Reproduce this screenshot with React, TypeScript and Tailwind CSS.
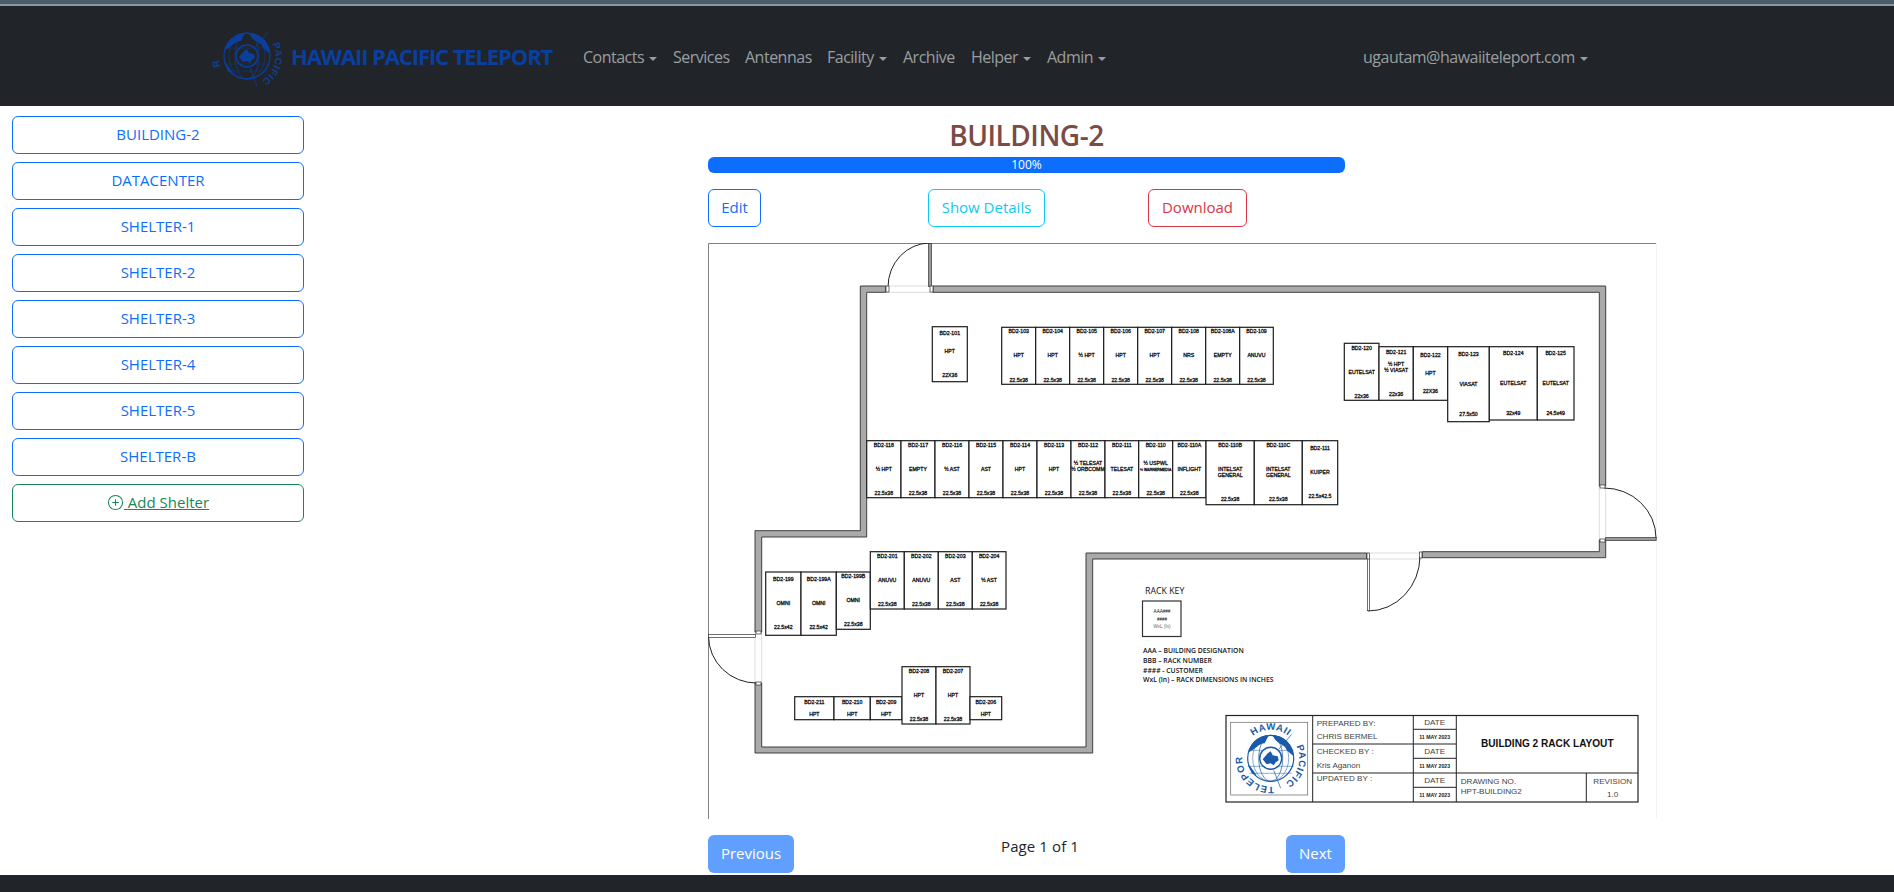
import { CirclePlus } from "lucide-react";

const shelters = [
  "BUILDING-2",
  "DATACENTER",
  "SHELTER-1",
  "SHELTER-2",
  "SHELTER-3",
  "SHELTER-4",
  "SHELTER-5",
  "SHELTER-B",
];

const navItems = [
  { label: "Contacts", caret: true, width: "w-[90px]" },
  { label: "Services", caret: false, width: "w-[72px]" },
  { label: "Antennas", caret: false, width: "w-[82px]" },
  { label: "Facility", caret: true, width: "w-[76px]" },
  { label: "Archive", caret: false, width: "w-[68px]" },
  { label: "Helper", caret: true, width: "w-[76px]" },
  { label: "Admin", caret: true, width: "w-[316px]" },
];

// ys = centre lines of the id, the first customer line and the size
type Rack = {
  x1: number;
  x2: number;
  y1: number;
  y2: number;
  id: string;
  who: string[];
  size: string;
  ys: [number, number, number];
};

function row(
  xs: number[],
  y1: number,
  y2: number,
  ys: [number, number, number],
  items: [string, string[], string, number?][],
): Rack[] {
  return items.map(([id, who, size, first], i) => ({
    x1: xs[i],
    x2: xs[i + 1],
    y1,
    y2,
    id,
    who,
    size,
    ys: [ys[0], first ?? ys[1], ys[2]],
  }));
}

const racks: Rack[] = [
  ...row([932.3, 967.3], 326.7, 381.7, [332.7, 351, 375], [["BD2-101", ["HPT"], "22X36"]]),
  ...row([1001.7, 1035.7, 1069.7, 1103.7, 1137.7, 1171.7, 1205.7, 1239.7, 1273.3], 327.3, 384.3, [331, 355, 380], [
    ["BD2-103", ["HPT"], "22.5x38"],
    ["BD2-104", ["HPT"], "22.5x38"],
    ["BD2-105", ["½ HPT"], "22.5x38"],
    ["BD2-106", ["HPT"], "22.5x38"],
    ["BD2-107", ["HPT"], "22.5x38"],
    ["BD2-108", ["NRS"], "22.5x38"],
    ["BD2-108A", ["EMPTY"], "22.5x38"],
    ["BD2-109", ["ANUVU"], "22.5x38"],
  ]),
  ...row([1344.3, 1379], 343.3, 400.3, [347.7, 371.7, 395.7], [["BD2-120", ["EUTELSAT"], "22x36"]]),
  ...row([1379, 1413.3], 346.7, 400.3, [352, 364, 394], [["BD2-121", ["½ HPT", "½ VIASAT"], "22x36"]]),
  ...row([1413.3, 1447.7], 346.7, 400.3, [355, 372.7, 391], [["BD2-122", ["HPT"], "22X36"]]),
  ...row([1447.7, 1489.3], 346.7, 421.7, [353.7, 383.7, 413.7], [["BD2-123", ["VIASAT"], "27.5x50"]]),
  ...row([1489.3, 1537.3, 1574], 346.7, 420, [352.7, 382.7, 412.7], [
    ["BD2-124", ["EUTELSAT"], "32x49"],
    ["BD2-125", ["EUTELSAT"], "24.5x49"],
  ]),
  ...row([866.7, 901, 935, 969, 1003, 1037, 1071, 1105, 1138.7, 1172.7, 1206], 440.7, 497.7, [445, 469, 493], [
    ["BD2-118", ["½ HPT"], "22.5x38"],
    ["BD2-117", ["EMPTY"], "22.5x38"],
    ["BD2-116", ["½ AST"], "22.5x38"],
    ["BD2-115", ["AST"], "22.5x38"],
    ["BD2-114", ["HPT"], "22.5x38"],
    ["BD2-113", ["HPT"], "22.5x38"],
    ["BD2-112", ["½ TELESAT", "½ ORBCOMM"], "22.5x38", 463],
    ["BD2-111", ["TELESAT"], "22.5x38"],
    ["BD2-110", ["½ USPWL", "½ WARNERMEDIA"], "22.5x38", 463],
    ["BD2-110A", ["INFLIGHT"], "22.5x38"],
  ]),
  ...row([1206, 1254.3, 1302.3], 440.7, 504.7, [445, 469, 499], [
    ["BD2-110B", ["INTELSAT", "GENERAL"], "22.5x38"],
    ["BD2-110C", ["INTELSAT", "GENERAL"], "22.5x38"],
  ]),
  ...row([1302.3, 1337.7], 440.7, 504.7, [447.7, 471.7, 495.7], [["BD2-111", ["KUIPER"], "22.5x42.5"]]),
  ...row([765.7, 801, 836.3], 572, 635.3, [578.7, 602.7, 627], [
    ["BD2-199", ["OMNI"], "22.5x42"],
    ["BD2-199A", ["OMNI"], "22.5x42"],
  ]),
  ...row([836.3, 870.3], 572, 629.3, [576, 600, 624], [["BD2-199B", ["OMNI"], "22.5x38"]]),
  ...row([870.3, 904.3, 938.3, 972.3, 1006], 551.7, 609, [555.7, 580, 604], [
    ["BD2-201", ["ANUVU"], "22.5x38"],
    ["BD2-202", ["ANUVU"], "22.5x38"],
    ["BD2-203", ["AST"], "22.5x38"],
    ["BD2-204", ["½ AST"], "22.5x38"],
  ]),
  ...row([794.7, 834, 870.3, 902], 696.7, 719.7, [702, 714, 0], [
    ["BD2-211", ["HPT"], ""],
    ["BD2-210", ["HPT"], ""],
    ["BD2-209", ["HPT"], ""],
  ]),
  ...row([902, 936, 970], 666.7, 724, [670.7, 695, 719], [
    ["BD2-208", ["HPT"], "22.5x38"],
    ["BD2-207", ["HPT"], "22.5x38"],
  ]),
  ...row([970, 1001.7], 696.7, 719.7, [702, 714, 0], [["BD2-206", ["HPT"], ""]]),
];

const walls = [
  "M933 286H1605.7V486H1599.3V292.3H933Z",
  "M1599.3 540H1605.7V557.7H1422.3V551.7H1599.3Z",
  "M1366.7 553H1086V747H761.7V683H755V753H1092.7V559H1366.7Z",
  "M755 632H761.7V537H866.7V292.3H885.7V286H860.3V530.7H755Z",
];

const sans = "'Liberation Sans', Arial, sans-serif";
const open = "'Open Sans', sans-serif";

function RackBox({ r }: { r: Rack }) {
  const cx = (r.x1 + r.x2) / 2;
  return (
    <g fontFamily={sans} fontSize={5.2} fill="#111" textAnchor="middle">
      <rect x={r.x1} y={r.y1} width={r.x2 - r.x1} height={r.y2 - r.y1} fill="#fff" stroke="#1c1c1c" strokeWidth={1.2} />
      <text x={cx} y={r.ys[0] + 1.8} stroke="#111" strokeWidth={0.3}>{r.id}</text>
      {r.who.map((w, i) => (
        <text
          key={w + i}
          x={cx}
          y={r.ys[1] + 1.8 + i * 6}
          stroke="#111"
          strokeWidth={0.3}
          fontSize={w.length > 11 ? 3.6 : 5.2}
        >
          {w}
        </text>
      ))}
      {r.size && <text x={cx} y={r.ys[2] + 1.8} stroke="#111" strokeWidth={0.3}>{r.size}</text>}
    </g>
  );
}

// the teleport seal, drawn around 0,0
function Globe({ color, pathId, full }: { color: string; pathId: string; full: boolean }) {
  const ring = "M-28.5 0A28.5 28.5 0 1 1 28.5 0A28.5 28.5 0 1 1 -28.5 0";
  return (
    <g>
      <path id={pathId} d={ring} fill="none" />
      <circle r={23} fill="none" stroke={color} strokeWidth={1.2} />
      <ellipse rx={12} ry={23} fill="none" stroke={color} strokeWidth={0.7} />
      <ellipse rx={18} ry={23} fill="none" stroke={color} strokeWidth={0.5} />
      <line x1={-23} x2={23} y1={-8} y2={-8} stroke={color} strokeWidth={0.5} />
      <line x1={-23} x2={23} y1={8} y2={8} stroke={color} strokeWidth={0.5} />
      <line x1={-21} x2={21} y1={15} y2={15} stroke={color} strokeWidth={0.5} />
      <path d="M-22 -6C-20 -17 -10 -23 -2 -23L-6 -15C-12 -15 -15 -9 -22 -6Z" fill={color} />
      <path d="M2 -23C13 -23 22 -14 23 -2L16 -8C14 -15 6 -13 2 -23Z" fill={color} />
      <path d="M-22 6L-14 17L-19 15Z" fill={color} />
      <line x1={8} y1={-9} x2={21} y2={-24} stroke={color} strokeWidth={0.7} />
      <line x1={3} y1={12} x2={10} y2={30} stroke={color} strokeWidth={0.7} />
      <circle r={11} fill={full ? "#fff" : "none"} stroke={color} strokeWidth={1.4} />
      <path d="M-8 1L-3 -5L0 -7L2 -3L7 -2L8 2L5 4L3 7L0 5L-4 6Z" fill={color} />
      <g fill={color} fontFamily={sans} fontWeight={700} fontSize={9.6} textAnchor="middle" letterSpacing={0.7}>
        {full && (
          <text>
            <textPath href={`#${pathId}`} startOffset="25%">HAWAII</textPath>
          </text>
        )}
        <text>
          <textPath href={`#${pathId}`} startOffset="54.8%">PACIFIC</textPath>
        </text>
        <text>
          <textPath href={`#${pathId}`} startOffset={full ? "89%" : "98%"}>{full ? "TELEPORT" : "RT"}</textPath>
        </text>
      </g>
    </g>
  );
}

function FloorPlan() {
  return (
    <svg viewBox="708 243 949 576" className="block h-[576px] w-[949px]">
      <rect x={708} y={243} width={949} height={576} fill="#fff" />
      <path d="M708.5 819V243.5H1657" fill="none" stroke="#808080" strokeWidth={1} />
      <path d="M1656.5 243V819" fill="none" stroke="#f2f2f2" strokeWidth={1} />

      {/* door openings */}
      <g fill="none" stroke="#ddd" strokeWidth={1}>
        <path d="M886 286H933M886 292.3H933" />
        <path d="M1599.3 486V540M1605.7 486V540" />
        <path d="M1367 553H1422M1367 559H1422" />
        <path d="M755 632V683M761.7 632V683" />
      </g>

      <g fill="#aaa" stroke="#3f3f3f" strokeWidth={1}>
        {walls.map((d) => (
          <path key={d} d={d} />
        ))}
      </g>

      {/* door leaves and swings */}
      <g fill="none" stroke="#222" strokeWidth={1}>
        <path d="M930 243A42 44 0 0 0 888 287" />
        <path d="M1604 488A52 50 0 0 1 1656 538" />
        <path d="M1368 611A52 55 0 0 0 1420 556" />
        <path d="M708.5 636A48 47 0 0 0 757 683" />
      </g>
      <g fill="#999" stroke="#333" strokeWidth={0.7}>
        <rect x={928.5} y={243.5} width={3} height={43} />
        <rect x={1605.7} y={537.5} width={50.5} height={3} />
        <rect x={1367.5} y={558.7} width={2} height={52} fill="#fff" />
        <rect x={708.5} y={634.5} width={47} height={3} fill="#fff" />
      </g>
      <g fill="#fff" stroke="#333" strokeWidth={0.7}>
        <rect x={886} y={286} width={3} height={6} />
        <rect x={930} y={286} width={3} height={6} />
        <rect x={1600} y={485} width={5} height={3} />
        <rect x={1600} y={539} width={5} height={3} />
        <rect x={1367} y={553} width={2.5} height={6} />
        <rect x={1419.5} y={552} width={2.5} height={6} />
        <rect x={756} y={631} width={5} height={3} />
        <rect x={756} y={682} width={5} height={3} />
      </g>

      {racks.map((r) => (
        <RackBox key={r.id + r.x1} r={r} />
      ))}

      {/* rack key */}
      <g fontFamily={open} fill="#111">
        <text x={1145} y={594} fontSize={8.8} fontWeight={500}>RACK KEY</text>
        <rect x={1142.5} y={601} width={38.5} height={35.5} fill="#fff" stroke="#333" strokeWidth={1.2} />
        <g fontSize={4.6} textAnchor="middle" fontFamily={sans}>
          <text x={1162} y={613}>AAA###</text>
          <text x={1162} y={621}>####</text>
          <text x={1162} y={628} fill="#666">WxL (In)</text>
        </g>
        <g fontSize={6.8} fontWeight={600}>
          <text x={1143} y={653}>AAA – BUILDING DESIGNATION</text>
          <text x={1143} y={663}>BBB – RACK NUMBER</text>
          <text x={1143} y={672.5}>#### - CUSTOMER</text>
          <text x={1143} y={682}>WxL (In) – RACK DIMENSIONS IN INCHES</text>
        </g>
      </g>

      {/* title block */}
      <rect x={1226} y={715.5} width={412} height={86.5} fill="#fff" stroke="#222" strokeWidth={1.2} />
      <rect x={1230.7} y={722.3} width={77} height={72.7} fill="#fff" stroke="#666" strokeWidth={0.7} />
      <g transform="translate(1270.7 758.3)">
        <Globe color="#1a5aa8" pathId="seal-title" full />
      </g>
      <path
        d="M1312.7 715.5V802M1413.3 715.5V802M1456.3 715.5V802M1586.3 773V802M1312.7 744H1456.3M1312.7 773H1638M1413.3 729.3H1456.3M1413.3 758.3H1456.3M1413.3 787.3H1456.3"
        fill="none"
        stroke="#222"
        strokeWidth={1}
      />
      <g fontFamily={sans} fontSize={8.1} fill="#444">
        <text x={1316.7} y={726}>PREPARED BY:</text>
        <text x={1316.7} y={739}>CHRIS BERMEL</text>
        <text x={1316.7} y={753.5}>CHECKED BY :</text>
        <text x={1316.7} y={768}>Kris Aganon</text>
        <text x={1316.7} y={781}>UPDATED BY :</text>
        <text x={1460.7} y={784}>DRAWING NO.</text>
        <text x={1460.7} y={794}>HPT-BUILDING2</text>
        <g textAnchor="middle">
          <text x={1434.7} y={725}>DATE</text>
          <text x={1434.7} y={754}>DATE</text>
          <text x={1434.7} y={783}>DATE</text>
          <text x={1612.7} y={784}>REVISION</text>
          <text x={1612.7} y={797}>1.0</text>
        </g>
      </g>
      <g fontFamily={sans} fontSize={5.2} fontWeight={700} fill="#222" textAnchor="middle">
        <text x={1434.7} y={739}>11 MAY 2023</text>
        <text x={1434.7} y={768}>11 MAY 2023</text>
        <text x={1434.7} y={797}>11 MAY 2023</text>
      </g>
      <text x={1547.3} y={746.5} fontFamily={sans} fontSize={10.1} fontWeight={700} fill="#111" textAnchor="middle">
        BUILDING 2 RACK LAYOUT
      </text>
    </svg>
  );
}

function Caret() {
  return <span className="ml-[5px] inline-block h-0 w-0 border-x-[4.5px] border-t-[4.5px] border-x-transparent border-t-current align-middle" />;
}

export default function App() {
  return (
    <div className="flex h-screen flex-col overflow-hidden bg-white font-['Open_Sans',sans-serif] text-[16px] text-[#212529]">
      <div className="h-1 bg-[#4a5c66]" />
      <div className="h-[2px] bg-[#8b979c]" />
      <nav className="flex h-[100px] items-center bg-[#212529] pl-[207px]">
        <svg viewBox="-40 -32 80 64" className="h-16 w-20">
          <Globe color="#0b3f9e" pathId="seal-nav" full={false} />
        </svg>
        <span className="ml-1 mr-[30px] w-[262px] whitespace-nowrap text-[22px] font-bold tracking-[-1.1px] text-[#0b3f9e]">
          HAWAII PACIFIC TELEPORT
        </span>
        <div className="flex items-center pt-[2px] tracking-[-0.5px] text-[#9b9ea0]">
          {navItems.map((item) => (
            <span key={item.label} className={`whitespace-nowrap ${item.width}`}>
              {item.label}
              {item.caret && <Caret />}
            </span>
          ))}
          <span className="whitespace-nowrap">
            ugautam@hawaiiteleport.com
            <Caret />
          </span>
        </div>
      </nav>

      <div className="flex">
        <aside className="flex w-[316px] flex-col gap-2 px-3 pt-[10px]">
          {shelters.map((name) => (
            <button
              key={name}
              type="button"
              className="h-[38px] rounded-md border border-[#0d6efd] pb-[2px] text-[15px] text-[#0d6efd]"
            >
              {name}
            </button>
          ))}
          <button
            type="button"
            className="flex h-[38px] items-center justify-center rounded-md border border-[#198754] pb-[2px] text-[15px] text-[#198754]"
          >
            <span className="flex items-center underline decoration-[#0d6efd]">
              <CirclePlus size={17} strokeWidth={1.5} />
              <span className="whitespace-pre"> Add Shelter</span>
            </span>
          </button>
        </aside>

        <main className="ml-[392px] flex w-[637px] flex-col">
          <h2 className="mt-[11px] h-[40px] text-center text-[28px] font-semibold leading-[36px] tracking-[-0.5px] text-[#7b4b45]">
            BUILDING-2
          </h2>
          <div className="flex h-4 items-center justify-center rounded-md bg-[#0d6efd] text-[12px] text-white">100%</div>
          <div className="mt-4 grid grid-cols-[220px_220px_197px] items-start">
            <button type="button" className="h-[38px] w-[53px] rounded-md border border-[#0d6efd] pb-[2px] text-[15px] text-[#0d6efd]">
              Edit
            </button>
            <button type="button" className="h-[38px] w-[117px] rounded-md border border-[#0dcaf0] pb-[2px] text-[15px] text-[#0dcaf0]">
              Show Details
            </button>
            <button type="button" className="h-[38px] w-[99px] rounded-md border border-[#dc3545] pb-[2px] text-[15px] text-[#dc3545]">
              Download
            </button>
          </div>
          <div className="mt-4">
            <FloorPlan />
          </div>
          <div className="mt-4 flex items-start justify-between">
            <button type="button" className="h-[38px] w-[86px] rounded-md bg-[#619fff] pb-[2px] text-[15px] font-medium text-white">
              Previous
            </button>
            <span className="text-[15px] tracking-[0.1px]">Page 1 of 1</span>
            <button type="button" className="h-[38px] w-[59px] rounded-md bg-[#619fff] pb-[2px] text-[15px] font-medium text-white">
              Next
            </button>
          </div>
        </main>
      </div>
      <footer className="mt-[2px] flex-1 bg-[#212529]" />
    </div>
  );
}
